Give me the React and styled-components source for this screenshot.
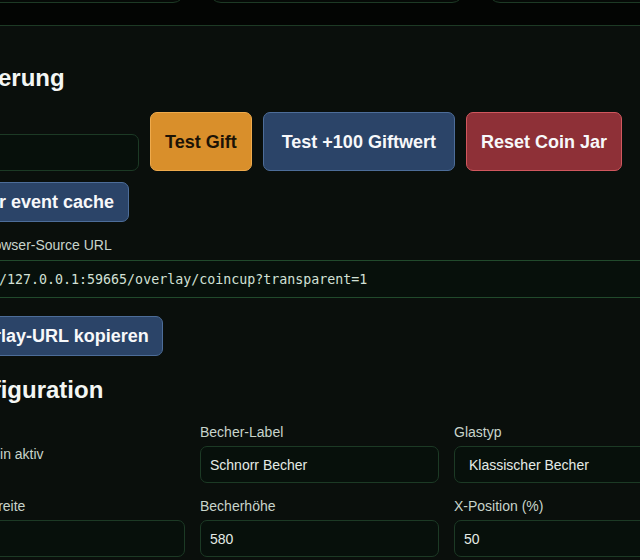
import styled, { createGlobalStyle } from "styled-components";

const GlobalStyle = createGlobalStyle`
  html, body {
    margin: 0;
    padding: 0;
    overflow: hidden;
    background: #030503;
    font-family: "Liberation Sans", Arial, sans-serif;
  }
`;

const App = () => {
  return (
    <>
      <GlobalStyle />
      <Page>
        <CardRow>
          <TopCard />
          <TopCard />
          <TopCard />
        </CardRow>
        <Panel>
          <Heading>Steuerung</Heading>
          <ActionRow>
            <Field $width="193px">
              <Label>Nutzer</Label>
              <TextInput defaultValue="" />
            </Field>
            <ActionButton $variant="gift">Test Gift</ActionButton>
            <ActionButton $padX={18}>Test +100 Giftwert</ActionButton>
            <ActionButton $variant="danger">Reset Coin Jar</ActionButton>
            <ActionButton>Clear event cache</ActionButton>
          </ActionRow>
          <UrlField>
            <Label>OBS Browser-Source URL</Label>
            <UrlBox>http://127.0.0.1:59665/overlay/coincup?transparent=1</UrlBox>
          </UrlField>
          <CopyButton $padX={13}>Overlay-URL kopieren</CopyButton>

          <Heading $top>Konfiguration</Heading>
          <ConfigGrid>
            <CheckCell>
              <Check type="checkbox" defaultChecked />
              <CheckText>Plugin aktiv</CheckText>
            </CheckCell>
            <Field>
              <Label>Becher-Label</Label>
              <TextInput defaultValue="Schnorr Becher" />
            </Field>
            <Field>
              <Label>Glastyp</Label>
              <Select defaultValue="classic">
                <option value="classic">Klassischer Becher</option>
                <option value="jar">Glas</option>
              </Select>
            </Field>
            <Field>
              <Label>Becherbreite</Label>
              <TextInput defaultValue="320" />
            </Field>
            <Field>
              <Label>Becherhöhe</Label>
              <TextInput defaultValue="580" />
            </Field>
            <Field>
              <Label>X-Position (%)</Label>
              <TextInput defaultValue="50" />
            </Field>
          </ConfigGrid>
        </Panel>
      </Page>
    </>
  );
};

export default App;

const Page = styled.div`
  margin-left: -78px;
  width: 820px;
`;

const CardRow = styled.div`
  display: flex;
  gap: 24px;
  padding-left: 9px;
  margin-top: -77px;
  margin-bottom: 22px;
`;

const TopCard = styled.div`
  width: 256px;
  height: 80px;
  box-sizing: border-box;
  border: 1px solid #1d3a25;
  border-radius: 12px;
  background: #060a07;
`;

const Panel = styled.div`
  display: flex;
  flex-direction: column;
  width: 797px;
  box-sizing: border-box;
  padding: 38px 24px 24px 23px;
  border: 1px solid #1d3a25;
  border-radius: 12px;
  background: #0a0f0c;
`;

const Heading = styled.h2`
  margin: ${(p) => (p.$top ? "20px" : "0")} 0 20px;
  font-size: 24px;
  line-height: 28px;
  font-weight: 700;
  color: #f3f6f4;
`;

const ActionRow = styled.div`
  display: flex;
  flex-wrap: wrap;
  gap: 11px;
`;

const Field = styled.div`
  display: flex;
  flex-direction: column;
  gap: 5px;
  width: ${(p) => p.$width || "auto"};
`;

const Label = styled.label`
  font-size: 14px;
  line-height: 17px;
  color: #c8d4cb;
`;

const TextInput = styled.input`
  height: 37px;
  box-sizing: border-box;
  padding: 0 9px;
  border: 1px solid #1c3a25;
  border-radius: 7px;
  background: #07100b;
  color: #e4ebe6;
  font-family: "Liberation Sans", Arial, sans-serif;
  font-size: 14px;
  outline: none;
`;

const Select = styled.select`
  height: 37px;
  box-sizing: border-box;
  padding: 0 10px;
  border: 1px solid #1c3a25;
  border-radius: 7px;
  background: #07100b;
  color: #e4ebe6;
  font-family: "Liberation Sans", Arial, sans-serif;
  font-size: 14px;
  outline: none;
`;

const buttonColors = {
  gift: { bg: "#d98f2b", border: "#eeaa4c", color: "#1c1306" },
  danger: { bg: "#8e3037", border: "#d0575e", color: "#f7f8fa" },
  default: { bg: "#2b4468", border: "#4d6d99", color: "#f7f8fa" },
};

const ActionButton = styled.button`
  display: flex;
  align-items: center;
  justify-content: center;
  padding: 9px ${(p) => p.$padX || 14}px;
  border: 1px solid ${(p) => buttonColors[p.$variant || "default"].border};
  border-radius: 7px;
  background: ${(p) => buttonColors[p.$variant || "default"].bg};
  color: ${(p) => buttonColors[p.$variant || "default"].color};
  font-family: "Liberation Sans", Arial, sans-serif;
  font-size: 18px;
  line-height: 20px;
  font-weight: 700;
  white-space: nowrap;
  cursor: pointer;
`;

const UrlField = styled.div`
  display: flex;
  flex-direction: column;
  gap: 6px;
  margin-top: 15px;
`;

const UrlBox = styled.div`
  height: 38px;
  box-sizing: border-box;
  display: flex;
  align-items: center;
  padding: 0 4px;
  border: 1px solid #214a2c;
  border-radius: 7px;
  background: #07100b;
  color: #d3e0d6;
  font-family: "DejaVu Sans Mono", "Liberation Mono", monospace;
  font-size: 13.3px;
  white-space: nowrap;
`;

const CopyButton = styled(ActionButton)`
  align-self: flex-start;
  margin-top: 18px;
`;

const ConfigGrid = styled.div`
  display: grid;
  grid-template-columns: repeat(3, 239px);
  column-gap: 15px;
  row-gap: 15px;
`;

const CheckCell = styled.label`
  display: flex;
  align-items: center;
  gap: 10px;
`;

const Check = styled.input`
  margin: 0;
  width: 16px;
  height: 16px;
  accent-color: #3fae5c;
`;

const CheckText = styled.span`
  font-size: 14px;
  color: #c8d4cb;
`;
